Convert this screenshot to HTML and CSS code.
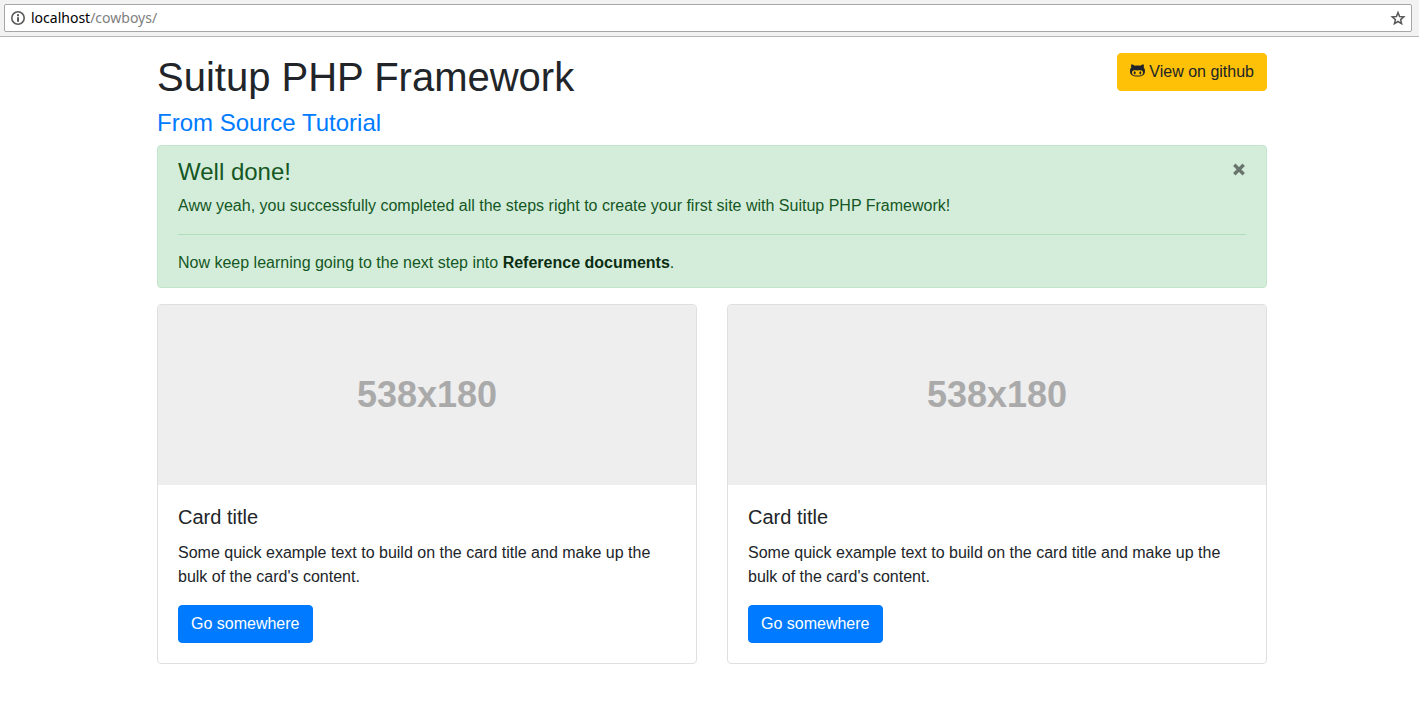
FILE: index.html
```html
<!DOCTYPE html>
<html lang="en">
<head>
<meta charset="utf-8">
<meta name="viewport" content="width=device-width, initial-scale=1">
<title>Suitup PHP Framework</title>
<link rel="stylesheet" href="styles.css">
</head>
<body>
<div class="toolbar">
  <div class="address">
    <svg class="address-icon" width="16" height="16" viewBox="0 0 16 16" aria-hidden="true">
      <circle cx="8" cy="8" r="6.2" fill="none" stroke="#5a5a5a" stroke-width="1.6"/>
      <path d="M7 4.200h2v2H7zM7 7.200h2v4.600H7z" fill="#5a5a5a"/>
    </svg>
    <div class="address-text"><span class="address-host">localhost</span>/cowboys/</div>
    <button class="star" type="button" aria-label="Bookmark this page">
      <svg width="16" height="16" viewBox="0 0 16 16" aria-hidden="true">
        <path d="M8 2.600l1.600 3.900 4.200.3-3.200 2.800 1 4.100L8 11.500l-3.600 2.200 1-4.100-3.200-2.800 4.200-.3z" fill="none" stroke="#5a5a5a" stroke-width="1.5"/>
      </svg>
    </button>
  </div>
</div>
<main class="container">
  <header class="header">
    <div>
      <h1 class="title">Suitup PHP Framework</h1>
      <h4 class="subtitle"><a href="#">From Source Tutorial</a></h4>
    </div>
    <a class="btn btn-warning" href="#"><svg class="cat" width="15" height="13" viewBox="0 0 15 13" aria-hidden="true">
      <path fill="currentColor" fill-rule="evenodd" d="M1.500.2C2.500.3 3.700.9 4.800 1.700 5.600 1.500 6.500 1.400 7.500 1.400s1.900.1 2.700.3c1.100-.8 2.300-1.400 3.300-1.500.5 1.100.5 2.400.2 3.300.9.9 1.300 2.100 1.300 3.600 0 4.200-2.600 5.500-7.500 5.500S0 11.300 0 7.100C0 5.600.4 4.400 1.300 3.500 1 2.600 1 1.300 1.500.2zM4.200 6.300C2.900 6.300 2 7.300 2 8.700c0 2.400 1.900 2.900 5.500 2.900s5.500-.5 5.500-2.900c0-1.400-.9-2.400-2.200-2.400-.9 0-2.100.2-3.300.2s-2.400-.2-3.300-.2z"/>
      <ellipse cx="4.700" cy="8.800" rx="1" ry="1.600" fill="currentColor"/>
      <ellipse cx="10.300" cy="8.800" rx="1" ry="1.600" fill="currentColor"/>
    </svg> View on github</a>
  </header>
  <div class="alert" role="alert">
    <button class="close" type="button" aria-label="Close">
      <svg width="14" height="24" viewBox="0 0 14 24" aria-hidden="true">
        <path d="M2.300 6.800l9.400 9.400M11.700 6.800l-9.400 9.400" stroke="currentColor" stroke-width="3.400"/>
      </svg>
    </button>
    <h4 class="alert-heading">Well done!</h4>
    <p>Aww yeah, you successfully completed all the steps right to create your first site with Suitup PHP Framework!</p>
    <hr>
    <p>Now keep learning going to the next step into <a class="alert-link" href="#">Reference documents</a>.</p>
  </div>
  <div class="cards">
    <section class="card">
      <div class="card-image">538x180</div>
      <div class="card-body">
        <h4 class="card-title">Card title</h4>
        <p class="card-text">Some quick example text to build on the card title and make up the bulk of the card's content.</p>
        <a class="btn btn-primary" href="#">Go somewhere</a>
      </div>
    </section>
    <section class="card">
      <div class="card-image">538x180</div>
      <div class="card-body">
        <h4 class="card-title">Card title</h4>
        <p class="card-text">Some quick example text to build on the card title and make up the bulk of the card's content.</p>
        <a class="btn btn-primary" href="#">Go somewhere</a>
      </div>
    </section>
  </div>
</main>
</body>
</html>
```
FILE: styles.css
```css
*, *::before, *::after { box-sizing: border-box; }
body {
  margin: 0;
  background: #fff;
  color: #212529;
  font: 16px/24px "Liberation Sans", Arial, sans-serif;
}
h1, h4, p { margin: 0; font-weight: 400; }
a { color: #007bff; text-decoration: none; }

.toolbar {
  padding: 4px 7px 4px 4px;
  background: #f2f2f2;
  border-bottom: 1px solid #b6b6b6;
}
.address {
  display: flex;
  align-items: center;
  height: 28px;
  padding: 0 5px;
  background: #fff;
  border: 1px solid #a6a6a6;
  border-radius: 2px;
}
.address-icon { margin-right: 5px; }
.address-text {
  flex: 1;
  color: #808080;
  font: 14px/20px "Noto Sans", sans-serif;
}
.address-host { color: #000; }
.star {
  display: flex;
  padding: 0;
  border: 0;
  background: none;
}

.container {
  max-width: 1145px;
  margin: 0 auto;
  padding: 16px 15px 16px 20px;
}
.header {
  display: flex;
  justify-content: space-between;
  align-items: flex-start;
}
.title {
  margin-bottom: 8px;
  font-size: 40px;
  line-height: 48px;
}
.subtitle, .alert-heading {
  margin-bottom: 8px;
  font-size: 24px;
  line-height: 28px;
}

.btn {
  display: inline-block;
  padding: 6px 12px;
  border: 1px solid;
  border-radius: 4px;
  white-space: nowrap;
}
.btn-warning { color: #212529; background: #ffc107; border-color: #ffc107; }
.btn-primary { color: #fff; background: #007bff; border-color: #007bff; }
.cat { vertical-align: 0; }

.alert {
  position: relative;
  margin-bottom: 16px;
  padding: 12px 20px;
  color: #155724;
  background: #d4edda;
  border: 1px solid #c3e6cb;
  border-radius: 4px;
}
.alert hr {
  margin: 16px 0;
  border: 0;
  border-top: 1px solid #b1dfbb;
}
.alert-link { color: #0b2e13; font-weight: 700; }
.close {
  position: absolute;
  top: 0;
  right: 0;
  display: flex;
  padding: 12px 20px;
  border: 0;
  background: none;
  color: #000;
  opacity: .5;
}

.cards {
  display: grid;
  grid-template-columns: 1fr 1fr;
  gap: 30px;
}
.card {
  border: 1px solid #dfdfdf;
  border-radius: 4px;
  overflow: hidden;
}
.card-image {
  display: flex;
  align-items: center;
  justify-content: center;
  height: 180px;
  background: #eee;
  color: #aaa;
  font-size: 36px;
  font-weight: 700;
}
.card-body { padding: 20px; }
.card-title {
  margin-bottom: 12px;
  font-size: 20px;
  line-height: 24px;
}
.card-text { margin-bottom: 16px; }
```
